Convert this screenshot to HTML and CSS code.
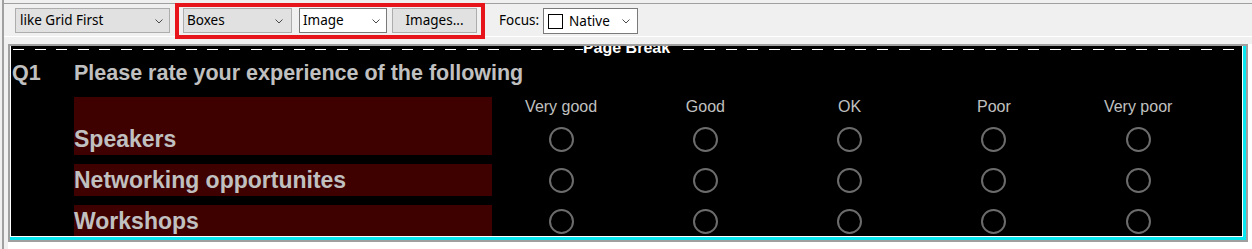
FILE: index.html
```html
<!DOCTYPE html>
<html>
<head>
<meta charset="utf-8">
<link rel="stylesheet" href="styles.css">
</head>
<body>
<div class="app">
  <div class="splitter"></div>
  <div class="main">
    <div class="toolbar">
      <div class="combo grey c1"><span class="val">like Grid First</span><svg class="chev" width="8" height="5" viewBox="0 0 8 5"><polyline points="0.5,0.5 4,4 7.5,0.5" fill="none" stroke="#4a4a4a" stroke-width="1"/></svg></div>
      <div class="hl">
        <div class="combo grey c2"><span class="val">Boxes</span><svg class="chev" width="8" height="5" viewBox="0 0 8 5"><polyline points="0.5,0.5 4,4 7.5,0.5" fill="none" stroke="#4a4a4a" stroke-width="1"/></svg></div>
        <div class="combo white c3"><span class="val">Image</span><svg class="chev" width="8" height="5" viewBox="0 0 8 5"><polyline points="0.5,0.5 4,4 7.5,0.5" fill="none" stroke="#4a4a4a" stroke-width="1"/></svg></div>
        <div class="btn">Images...</div>
      </div>
      <span class="focus-lbl">Focus:</span>
      <div class="combo white c4"><span class="swatch"></span><span class="val">Native</span><svg class="chev" width="8" height="5" viewBox="0 0 8 5"><polyline points="0.5,0.5 4,4 7.5,0.5" fill="none" stroke="#4a4a4a" stroke-width="1"/></svg></div>
    </div>
    <div class="workspace">
      <div class="canvas">
        <div class="frame">
          <div class="sel">
            <div class="page">
              <div class="pb">
                <div class="dashes"></div>
                <span class="pb-label">Page Break</span>
              </div>
              <div class="qrow">
                <span class="qnum">Q1</span>
                <span class="qtext">Please rate your experience of the following</span>
              </div>
              <div class="grid">
                <div class="lab lab-first">Speakers</div>
                <div class="hdr">Very good</div>
                <div class="hdr">Good</div>
                <div class="hdr">OK</div>
                <div class="hdr">Poor</div>
                <div class="hdr">Very poor</div>
                <div class="opt"><span class="radio"></span></div>
                <div class="opt"><span class="radio"></span></div>
                <div class="opt"><span class="radio"></span></div>
                <div class="opt"><span class="radio"></span></div>
                <div class="opt"><span class="radio"></span></div>
                <div class="lab">Networking opportunites</div>
                <div class="opt"><span class="radio"></span></div>
                <div class="opt"><span class="radio"></span></div>
                <div class="opt"><span class="radio"></span></div>
                <div class="opt"><span class="radio"></span></div>
                <div class="opt"><span class="radio"></span></div>
                <div class="lab">Workshops</div>
                <div class="opt"><span class="radio"></span></div>
                <div class="opt"><span class="radio"></span></div>
                <div class="opt"><span class="radio"></span></div>
                <div class="opt"><span class="radio"></span></div>
                <div class="opt"><span class="radio"></span></div>
              </div>
            </div>
          </div>
        </div>
      </div>
    </div>
  </div>
</div>
</body>
</html>
```

FILE: styles.css
```css
* { box-sizing: border-box; }
html, body { margin: 0; padding: 0; }
body {
  width: 1252px;
  height: 249px;
  overflow: hidden;
  background: #f0f0f0;
  font-family: "Noto Sans", "Liberation Sans", sans-serif;
}
.app {
  display: flex;
  height: 249px;
  background: #f0f0f0;
}
.splitter {
  width: 2px;
  margin-left: 2px;
  background: #a0a0a0;
}
.main {
  flex: 1;
  display: flex;
  flex-direction: column;
  min-width: 0;
}
.toolbar {
  margin-top: 3px;
  height: 34px;
  border-top: 1px solid #a0a0a0;
  border-bottom: 1px solid #ffffff;
  display: flex;
  align-items: flex-start;
  font-size: 13.5px;
  color: #000;
}
.combo {
  display: flex;
  align-items: center;
  height: 25px;
  margin-top: 4px;
  border: 1px solid #adadad;
  padding: 0 7px 0 3px;
  line-height: 23px;
  white-space: nowrap;
}
.combo .val { flex: 1; }
.combo .chev { flex: none; margin-top: 1px; }
.grey { background: #e1e1e1; }
.white { background: #ffffff; border-color: #7a7a7a; }
.c1 { width: 155px; margin-left: 11px; padding-left: 4px; padding-right: 6px; }
.hl {
  position: relative;
  z-index: 1;
  display: flex;
  align-items: flex-start;
  margin-left: 5px;
  margin-top: -1px;
  border: 4px solid #e8141c;
  padding: 0 4px 2px 4px;
}
.c2 { width: 109px; margin-top: 1px; padding-right: 8px; }
.c3 { width: 88px; margin-top: 1px; margin-left: 7px; padding-right: 6px; }
.btn {
  width: 85px;
  height: 25px;
  margin-top: 1px;
  margin-left: 5px;
  background: #e1e1e1;
  border: 1px solid #adadad;
  text-align: center;
  line-height: 23px;
}
.focus-lbl {
  margin-left: 14px;
  margin-top: 4px;
  line-height: 25px;
}
.c4 { width: 95px; height: 26px; margin-left: 4px; padding-left: 4px; padding-right: 7px; }
.swatch {
  width: 15px;
  height: 15px;
  border: 1px solid #000;
  background: #fff;
  margin-right: 6px;
  flex: none;
}
.workspace {
  flex: 1;
  display: flex;
  flex-direction: column;
  padding-top: 7px;
}
.canvas {
  flex: 1;
  margin-left: 4px;
  background: #ffffff;
}
.frame {
  width: 1240px;
  height: 198px;
  border: 2px solid #a0a0a0;
}
.sel {
  border-right: 3px solid #0ae6ef;
  border-bottom: 3px solid #0ae6ef;
}
.page {
  height: 191px;
  background: #000;
  border: 1px solid #ffffff;
  border-top: none;
  overflow: hidden;
  font-family: "Liberation Sans", Arial, sans-serif;
  color: #c0c0c0;
}
.pb {
  height: 8px;
  display: grid;
  grid-template-rows: 8px;
  grid-template-columns: 1fr;
}
.dashes {
  grid-area: 1 / 1;
  height: 1px;
  margin: 3px 1px 0 2px;
  background: repeating-linear-gradient(90deg, #ffffff 0 11px, transparent 11px 21.6px);
}
.pb-label {
  grid-area: 1 / 1;
  justify-self: center;
  align-self: start;
  margin-top: -6px;
  margin-left: 13px;
  padding-right: 13px;
  background: #000;
  color: #fff;
  font-weight: bold;
  font-size: 16px;
  line-height: 16px;
}
.qrow {
  display: flex;
  margin-top: 6px;
  font-weight: bold;
  font-size: 21.5px;
  line-height: 26px;
  white-space: nowrap;
}
.qnum { width: 63px; padding-left: 1px; }
.grid {
  margin-top: 11px;
  margin-left: 63px;
  display: grid;
  grid-template-columns: 415px repeat(5, 144.25px);
  grid-template-rows: 17px 32px 32px 32px;
  row-gap: 9px;
}
.lab {
  background: #3f0000;
  margin-right: -3px;
  font-weight: bold;
  font-size: 23px;
  line-height: 32px;
  white-space: nowrap;
  grid-column: 1;
}
.lab-first {
  grid-row: 1 / 3;
  display: flex;
  align-items: flex-end;
}
.hdr {
  grid-row: 1;
  text-align: center;
  font-size: 16px;
  line-height: 17px;
  padding-top: 1px;
  white-space: nowrap;
}
.opt {
  display: flex;
  align-items: center;
  justify-content: center;
}
.radio {
  width: 25px;
  height: 25px;
  border: 2px solid #6c6c6c;
  border-radius: 50%;
}
```
